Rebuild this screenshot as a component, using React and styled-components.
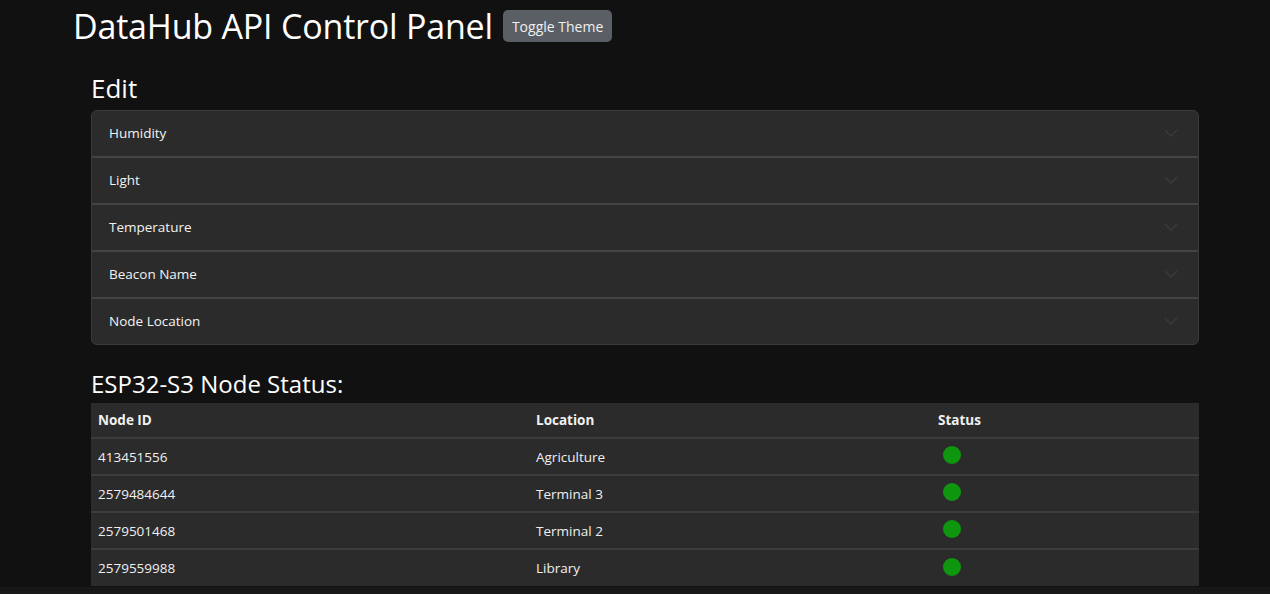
import React from "react";
import styled, { createGlobalStyle } from "styled-components";

const Global = createGlobalStyle`
  html, body { margin: 0; padding: 0; background: #111111; }
  body { font-family: "Open Sans", "Noto Sans", "Liberation Sans", sans-serif; color: #ffffff; overflow: hidden; }
  * { box-sizing: border-box; }
`;

const Page = styled.div`
  display: flex;
  flex-direction: column;
  min-height: 594px;
`;

const Header = styled.header`
  display: flex;
  align-items: center;
  gap: 10px;
  padding: 5px 0 0 73px;
`;

const Title = styled.h1`
  margin: 0;
  font-size: 34px;
  font-weight: 400;
  line-height: 42px;
  letter-spacing: -0.2px;
  color: #ffffff;
`;

const ToggleButton = styled.button`
  height: 32px;
  padding: 0 9px;
  border: none;
  border-radius: 5px;
  background: #5a5f66;
  color: #f0f0f0;
  font-family: inherit;
  font-size: 14px;
  cursor: pointer;
`;

const Main = styled.main`
  width: 1108px;
  margin-left: 91px;
  display: flex;
  flex-direction: column;
`;

const SectionTitle = styled.h2`
  margin: ${(p) => p.$top}px 0 0 0;
  font-size: ${(p) => p.$size || 24}px;
  font-weight: 400;
  line-height: 32px;
  color: #ffffff;
`;

const Accordion = styled.div`
  margin-top: 6px;
  border: 1px solid #3a3a3a;
  border-radius: 6px;
  overflow: hidden;
  background: #2b2b2b;
`;

const AccordionItem = styled.div`
  display: flex;
  align-items: center;
  justify-content: space-between;
  height: ${(p) => (p.$first ? 45 : 47)}px;
  padding: 0 20px 1px 17px;
  font-size: 13.5px;
  color: #f2f2f2;
  border-top: ${(p) => (p.$first ? "none" : "2px solid #434343")};
`;

const Chevron = () => (
  <svg width="14" height="8" viewBox="0 0 14 8" fill="none">
    <polyline points="1,1 7,7 13,1" stroke="#3b3b3b" strokeWidth="1.4" />
  </svg>
);

const Table = styled.table`
  margin-top: 3px;
  width: 100%;
  border-collapse: collapse;
  background: #2b2b2b;
  font-size: 13.5px;
  color: #f0f0f0;
`;

const Th = styled.th`
  text-align: left;
  font-weight: 700;
  height: 35px;
  padding: 0 7px;
  width: ${(p) => p.$w};
`;

const Tr = styled.tr`
  border-top: 2px solid #3c3c3c;
`;

const Td = styled.td`
  height: 37px;
  padding: 0 7px;
`;

const Dot = styled.span`
  display: block;
  width: 18px;
  height: 18px;
  margin: -3px 0 0 5px;
  border-radius: 50%;
  background: #0e960e;
`;

const Footer = styled.div`
  margin-top: 1px;
  height: 20px;
  background: #181818;
`;

const items = ["Humidity", "Light", "Temperature", "Beacon Name", "Node Location"];
const nodes = [
  ["413451556", "Agriculture"],
  ["2579484644", "Terminal 3"],
  ["2579501468", "Terminal 2"],
  ["2579559988", "Library"],
];

export default function App() {
  return (
    <Page>
      <Global />
      <Header>
        <Title>DataHub API Control Panel</Title>
        <ToggleButton>Toggle Theme</ToggleButton>
      </Header>
      <Main>
        <SectionTitle $top={25} $size={26}>Edit</SectionTitle>
        <Accordion>
          {items.map((t, i) => (
            <AccordionItem key={t} $first={i === 0}>
              <span>{t}</span>
              <Chevron />
            </AccordionItem>
          ))}
        </Accordion>
        <SectionTitle $top={23}>ESP32-S3 Node Status:</SectionTitle>
        <Table>
          <thead>
            <tr>
              <Th $w="438px">Node ID</Th>
              <Th $w="402px">Location</Th>
              <Th>Status</Th>
            </tr>
          </thead>
          <tbody>
            {nodes.map(([id, loc]) => (
              <Tr key={id}>
                <Td>{id}</Td>
                <Td>{loc}</Td>
                <Td>
                  <Dot />
                </Td>
              </Tr>
            ))}
          </tbody>
        </Table>
      </Main>
      <Footer />
    </Page>
  );
}
